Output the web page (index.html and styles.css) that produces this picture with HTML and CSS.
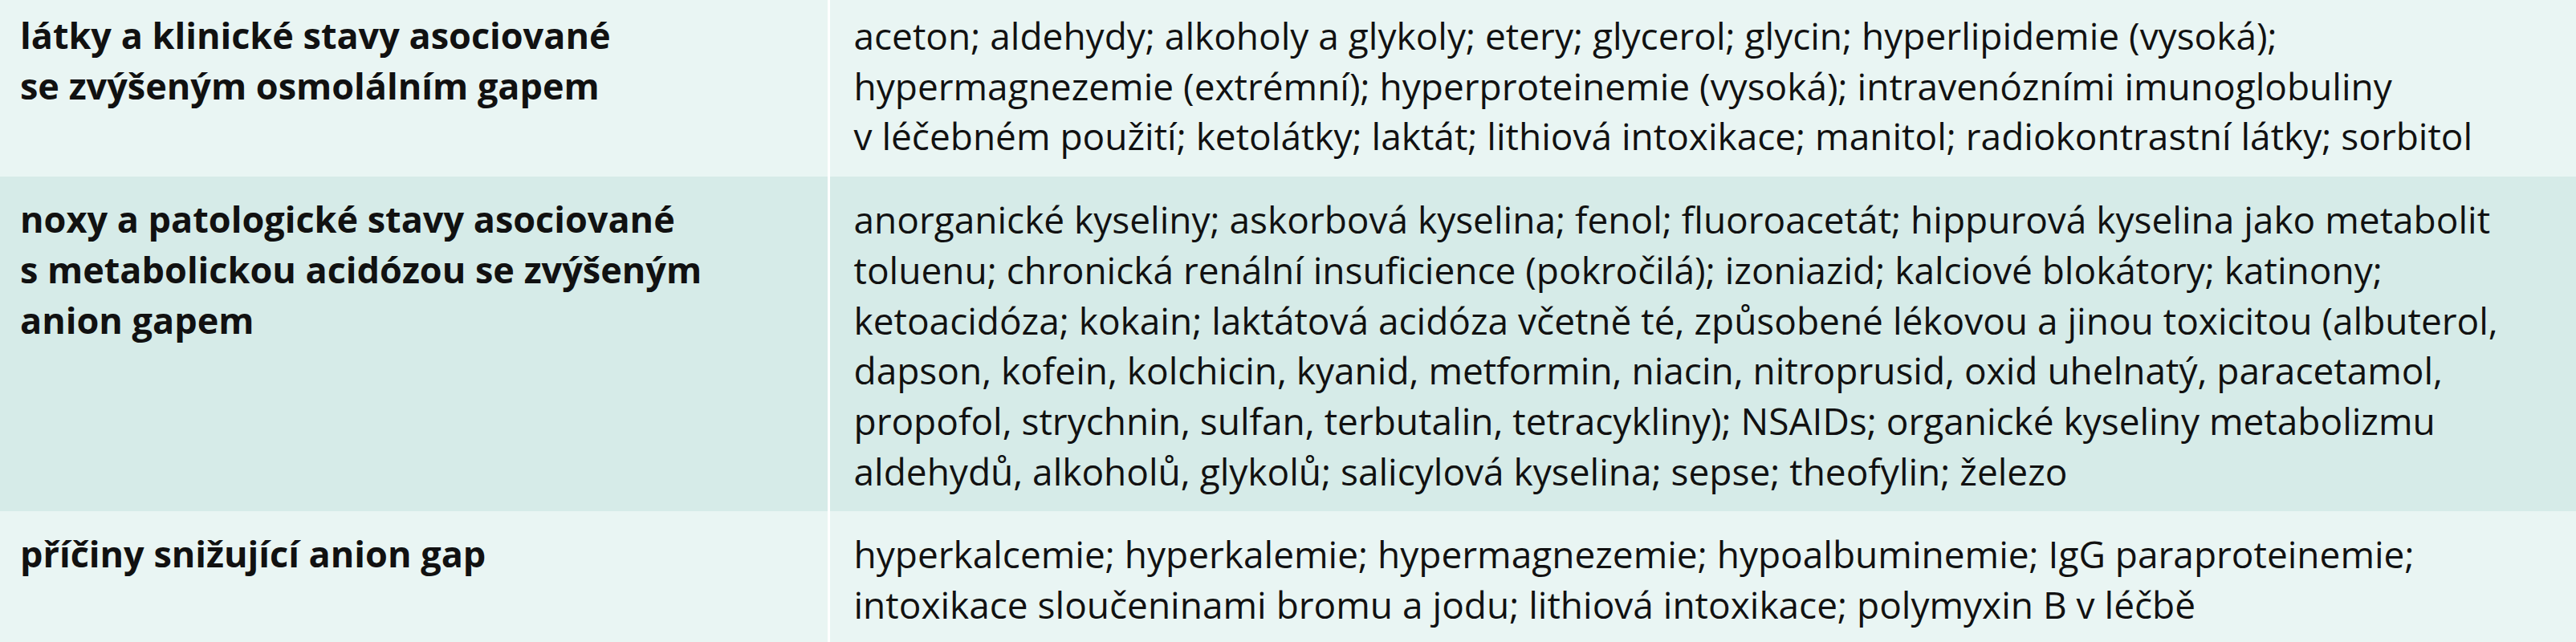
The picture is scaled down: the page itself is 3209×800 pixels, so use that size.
FILE: index.html
```html
<!DOCTYPE html>
<html lang="cs">
<head>
<meta charset="utf-8">
<title>Anion gap</title>
<link rel="stylesheet" href="styles.css">
</head>
<body>
<table class="tbl">
  <tr class="row row-light row-first">
    <td class="label">látky a klinické stavy asociované<br>se zvýšeným osmolálním gapem</td>
    <td class="value">aceton; aldehydy; alkoholy a glykoly; etery; glycerol; glycin; hyperlipidemie (vysoká);<br>hypermagnezemie (extrémní); hyperproteinemie (vysoká); intravenózními imunoglobuliny<br>v léčebném použití; ketolátky; laktát; lithiová intoxikace; manitol; radiokontrastní látky; sorbitol</td>
  </tr>
  <tr class="row row-dark">
    <td class="label">noxy a patologické stavy asociované<br>s metabolickou acidózou se zvýšeným<br>anion gapem</td>
    <td class="value">anorganické kyseliny; askorbová kyselina; fenol; fluoroacetát; hippurová kyselina jako metabolit<br>toluenu; chronická renální insuficience (pokročilá); izoniazid; kalciové blokátory; katinony;<br>ketoacidóza; kokain; laktátová acidóza včetně té, způsobené lékovou a jinou toxicitou (albuterol,<br>dapson, kofein, kolchicin, kyanid, metformin, niacin, nitroprusid, oxid uhelnatý, paracetamol,<br>propofol, strychnin, sulfan, terbutalin, tetracykliny); NSAIDs; organické kyseliny metabolizmu<br>aldehydů, alkoholů, glykolů; salicylová kyselina; sepse; theofylin; železo</td>
  </tr>
  <tr class="row row-light">
    <td class="label">příčiny snižující anion gap</td>
    <td class="value">hyperkalcemie; hyperkalemie; hypermagnezemie; hypoalbuminemie; IgG paraproteinemie;<br>intoxikace sloučeninami bromu a jodu; lithiová intoxikace; polymyxin B v léčbě</td>
  </tr>
</table>
</body>
</html>
```

FILE: styles.css
```css
html, body {
  margin: 0;
  padding: 0;
  background: #ffffff;
}

body {
  width: 3209px;
  font-family: "Open Sans", "Noto Sans", "Liberation Sans", sans-serif;
  font-size: 46px;
  line-height: 62.7px;
  color: #111111;
}

.tbl {
  width: 100%;
  border-collapse: collapse;
  border-spacing: 0;
}

.row td {
  vertical-align: top;
  padding-top: 22px;
  padding-bottom: 19px;
  white-space: nowrap;
}

.row-first td {
  padding-top: 13px;
}

.row-light td {
  background: #e9f5f3;
}

.row-dark td {
  background: #d6ebe8;
}

.label {
  box-sizing: border-box;
  width: 1032px;
  padding-left: 25px;
  padding-right: 10px;
  font-size: 45px;
  font-weight: 700;
}

.value {
  border-left: 3px solid #ffffff;
  padding-left: 30px;
  padding-right: 8px;
  font-weight: 400;
}
```
